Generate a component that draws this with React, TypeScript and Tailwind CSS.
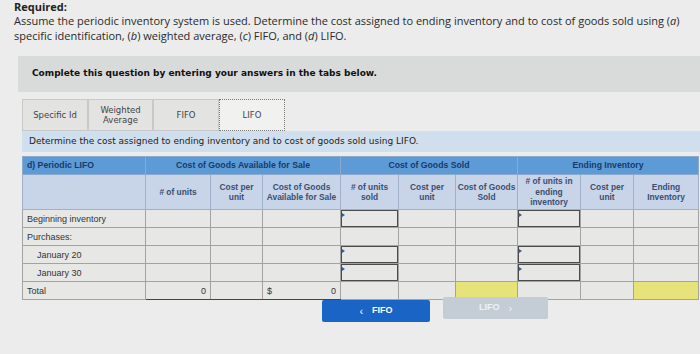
import React from "react";

const verdana = { fontFamily: '"DejaVu Sans", Verdana, sans-serif' };
const arial = { fontFamily: '"Liberation Sans", Arial, sans-serif' };

const tabs = [
  { label: "Specific Id", w: "w-[66px]" },
  { label: "Weighted\nAverage", w: "w-[65px]" },
  { label: "FIFO", w: "w-[66px]" },
  { label: "LIFO", w: "w-[66px]", active: true },
];

type Row = {
  label: string;
  indent?: boolean;
  total?: boolean;
  soldInput?: boolean;
  endInput?: boolean;
};

const rows: Row[] = [
  { label: "Beginning inventory", soldInput: true, endInput: true },
  { label: "Purchases:" },
  { label: "January 20", indent: true, soldInput: true, endInput: true },
  { label: "January 30", indent: true, soldInput: true, endInput: true },
  { label: "Total", total: true },
];

const colWidths = [123, 65, 52, 78, 58, 57, 62, 63, 53, 65];

function Cell({
  children,
  input,
  yellow,
  className = "",
}: {
  children?: React.ReactNode;
  input?: boolean;
  yellow?: boolean;
  className?: string;
}) {
  return (
    <td
      className={`h-[18px] border border-[#a3a3a3] p-0 text-[9px] leading-[16px] text-[#333] ${
        yellow ? "bg-[#e6e37a]" : "bg-[#e7e7e5]"
      } ${className}`}
    >
      {input ? (
        <div className="relative h-[17px] border border-[#4b4b4b]">
          <span className="absolute left-0 top-[2px] h-0 w-0 border-y-[2px] border-l-[3px] border-y-transparent border-l-[#33609a]" />
        </div>
      ) : (
        children
      )}
    </td>
  );
}

export default function App() {
  return (
    <div className="h-[354px] w-[700px] overflow-hidden bg-[#ebeceb] text-[#333]">
      {/* question text */}
      <div className="pl-[14px]" style={{ fontFamily: '"Open Sans", Arial, sans-serif' }}>
        <p className="text-[11px] font-bold leading-[13px] text-[#222]">Required:</p>
        <p className="text-[11px] leading-[15px] text-[#2a2a2a]">
          Assume the periodic inventory system is used. Determine the cost assigned to ending inventory and to cost of goods sold using (
          <i>a</i>)
          <br />
          specific identification, (<i>b</i>) weighted average, (<i>c</i>) FIFO, and (<i>d</i>) LIFO.
        </p>
      </div>

      <div className="ml-[18px] mt-[13px]">
        {/* instructions band */}
        <div className="flex h-[36px] items-center bg-[#d9dada] pl-[14px]" style={verdana}>
          <span className="text-[9px] font-bold text-[#111]">
            Complete this question by entering your answers in the tabs below.
          </span>
        </div>

        {/* tabs */}
        <div className="flex pl-[4px] pt-[7px]" style={verdana}>
          {tabs.map((t) => (
            <div
              key={t.label}
              className={`${t.w} flex h-[32px] items-center justify-center whitespace-pre-line text-center text-[8.5px] leading-[10px] text-[#444] ${
                t.active
                  ? "border border-dotted border-[#777] bg-[#f1f1f0]"
                  : "border border-[#c9c9c9] bg-[#e3e3e2]"
              }`}
            >
              {t.label}
            </div>
          ))}
        </div>

        {/* task band */}
        <div className="ml-[4px] flex h-[21px] items-center bg-[#cfdfee] pl-[7px]" style={verdana}>
          <span className="text-[9px] text-[#222]">
            Determine the cost assigned to ending inventory and to cost of goods sold using LIFO.
          </span>
        </div>

        {/* LIFO table */}
        <table
          className="ml-[4px] mt-[4px] table-fixed border-collapse"
          style={{ ...arial, width: 676 }}
        >
          <colgroup>
            {colWidths.map((w, i) => (
              <col key={i} style={{ width: w }} />
            ))}
          </colgroup>
          <thead>
            <tr className="h-[18px] bg-[#5d9bd6] text-[8.7px] font-bold text-[#173a6a]">
              <th className="border border-[#8aa9cc] pl-[4px] text-left">d) Periodic LIFO</th>
              <th colSpan={3} className="border border-[#8aa9cc]">
                Cost of Goods Available for Sale
              </th>
              <th colSpan={3} className="border border-[#8aa9cc] border-l-[#234]">
                Cost of Goods Sold
              </th>
              <th colSpan={3} className="border border-[#8aa9cc] border-l-[#234]">
                Ending Inventory
              </th>
            </tr>
            <tr className="h-[35px] whitespace-nowrap bg-[#c8d4e8] text-[8.4px] font-bold leading-[10.5px] text-[#3b4f72]">
              <th className="border border-[#9fb0c8]" />
              <th className="border border-[#9fb0c8]"># of units</th>
              <th className="border border-[#9fb0c8]">
                Cost per
                <br />
                unit
              </th>
              <th className="border border-[#9fb0c8]">
                Cost of Goods
                <br />
                Available for Sale
              </th>
              <th className="border border-[#9fb0c8] border-l-[#234]">
                # of units
                <br />
                sold
              </th>
              <th className="border border-[#9fb0c8]">
                Cost per
                <br />
                unit
              </th>
              <th className="border border-[#9fb0c8]">
                Cost of Goods
                <br />
                Sold
              </th>
              <th className="border border-[#9fb0c8] border-l-[#234]">
                # of units in
                <br />
                ending
                <br />
                inventory
              </th>
              <th className="border border-[#9fb0c8]">
                Cost per
                <br />
                unit
              </th>
              <th className="border border-[#9fb0c8]">
                Ending
                <br />
                Inventory
              </th>
            </tr>
          </thead>
          <tbody>
            {rows.map((r) => (
              <tr key={r.label}>
                <Cell className={r.indent ? "pl-[14px]" : "pl-[4px]"}>{r.label}</Cell>
                <Cell className={r.total ? "border-b-[#444] pr-[4px] text-right" : ""}>
                  {r.total ? "0" : null}
                </Cell>
                <Cell className={r.total ? "border-b-[#444]" : ""} />
                <Cell className={r.total ? "border-b-[#444] px-[4px]" : ""}>
                  {r.total ? (
                    <div className="flex justify-between">
                      <span>$</span>
                      <span>0</span>
                    </div>
                  ) : null}
                </Cell>
                <Cell input={r.soldInput} />
                <Cell />
                <Cell yellow={r.total} />
                <Cell input={r.endInput} />
                <Cell />
                <Cell yellow={r.total} />
              </tr>
            ))}
          </tbody>
        </table>

        {/* navigation */}
        <div className="flex pl-[304px]" style={arial}>
          <button className="flex h-[22px] w-[108px] items-center justify-center gap-[9px] rounded-[2px] bg-[#1a64c6] text-[9px] font-bold text-white">
            <span className="text-[11px] font-normal">‹</span>
            FIFO
          </button>
          <button className="-mt-[3px] ml-[13px] flex h-[22px] w-[105px] items-center justify-center gap-[9px] rounded-[2px] bg-[#c4cdd5] text-[9px] font-bold text-[#eef2f6]">
            LIFO
            <span className="text-[11px] font-normal">›</span>
          </button>
        </div>
      </div>
    </div>
  );
}
